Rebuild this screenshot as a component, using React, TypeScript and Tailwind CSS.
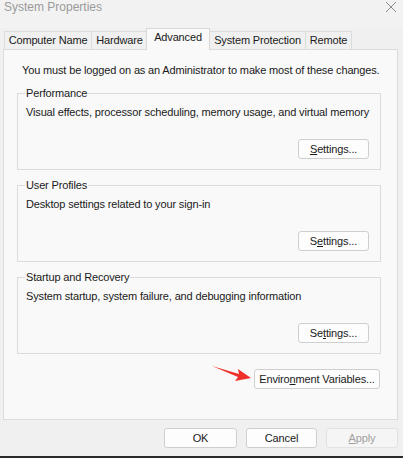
import React from "react";

function Btn({ children, className = "", disabled = false }: { children: React.ReactNode; className?: string; disabled?: boolean }) {
  return (
    <div
      className={
        "flex items-center justify-center h-[20px] rounded-[3px] border text-[11px] tracking-[-0.15px] whitespace-nowrap " +
        (disabled ? "border-[#e2e2e2] bg-[#f5f5f5] text-[#a0a0a0] " : "border-[#cfcfcf] bg-[#fdfdfd] text-[#1a1a1a] ") +
        className
      }
    >
      {children}
    </div>
  );
}

function Group({ title, desc, btn }: { title: string; desc: string; btn: React.ReactNode }) {
  return (
    <fieldset className="ml-[13px] mr-[16px] border border-[#dcdcdc] pl-[7px] pr-[11px] pb-[10px]">
      <legend className="px-[1px] text-[11px] leading-[16px] tracking-[-0.15px] text-[#1a1a1a]">{title}</legend>
      <div className="mt-[3px] pl-[1px] text-[11px] leading-[16px] tracking-[-0.15px] whitespace-nowrap text-[#1a1a1a]">{desc}</div>
      <div className="mt-[19px] flex justify-end">
        <Btn className="w-[71px]">{btn}</Btn>
      </div>
    </fieldset>
  );
}

export default function App() {
  const tabs = [
    { t: "Computer Name", w: 88 },
    { t: "Hardware", w: 57 },
    { t: "Advanced", w: 64, active: true },
    { t: "System Protection", w: 97 },
    { t: "Remote", w: 47 },
  ];
  return (
    <div
      className="w-[403px] h-[458px] bg-[#f0f0f0] flex flex-col overflow-hidden"
      style={{ fontFamily: '"Liberation Sans", Arial, sans-serif' }}
    >
      <div className="h-[28px] flex items-start justify-between bg-[#f2f2f2]">
        <div className="pl-[4px] pt-0 text-[12px] leading-[14px] text-[#9a9a9a]">System Properties</div>
        <svg width="12" height="12" viewBox="0 0 12 12" className="mr-[6px] mt-[1px]">
          <path d="M1 1 L11 11 M11 1 L1 11" stroke="#8a8a8a" strokeWidth="1" fill="none" />
        </svg>
      </div>
      <div className="flex items-end h-[21px] pl-[4px] relative z-10">
        {tabs.map((tab) =>
          tab.active ? (
            <div
              key={tab.t}
              style={{ width: tab.w }}
              className="h-[22px] -mb-px border border-b-0 border-[#d9d9d9] bg-[#f9f9f9] flex items-start justify-center pt-[2px] text-[11px] leading-[13px] tracking-[-0.15px] text-[#1a1a1a] -mx-px relative"
            >
              {tab.t}
            </div>
          ) : (
            <div
              key={tab.t}
              style={{ width: tab.w }}
              className="h-[18px] border border-b-0 border-[#dcdcdc] bg-[#f0f0f0] flex items-center justify-center text-[11px] leading-[13px] tracking-[-0.15px] text-[#1a1a1a] -mr-px"
            >
              {tab.t}
            </div>
          )
        )}
      </div>
      <div className="ml-[3px] mr-[5px] h-[371px] border border-[#dcdcdc] bg-[#f9f9f9] flex flex-col">
        <div className="mt-[12px] pl-[18px] text-[11px] leading-[16px] tracking-[-0.15px] whitespace-nowrap text-[#1a1a1a]">
          You must be logged on as an Administrator to make most of these changes.
        </div>
        <div className="mt-[7px] flex flex-col gap-[7px]">
          <Group title="Performance" desc="Visual effects, processor scheduling, memory usage, and virtual memory" btn={<span><u>S</u>ettings...</span>} />
          <Group title="User Profiles" desc="Desktop settings related to your sign-in" btn={<span>S<u>e</u>ttings...</span>} />
          <Group title="Startup and Recovery" desc="System startup, system failure, and debugging information" btn={<span>Se<u>t</u>tings...</span>} />
        </div>
        <div className="mt-[15px] flex justify-end mr-[17px] relative">
          <svg width="42" height="20" viewBox="0 0 42 20" className="absolute left-[207px] top-[-5px]">
            <path d="M1 2 L28 10 L27 5 L40 14 L24 17 L27 13 Z" fill="#f0302a" />
          </svg>
          <Btn className="w-[126px] h-[20px]">
            <span>Enviro<u>n</u>ment Variables...</span>
          </Btn>
        </div>
      </div>
      <div className="mt-[8px] flex justify-end gap-[9px] pr-[5px]">
        <Btn className="w-[73px]">OK</Btn>
        <Btn className="w-[71px]">Cancel</Btn>
        <Btn className="w-[72px]" disabled>
          <span><u>A</u>pply</span>
        </Btn>
      </div>
      <div className="flex-1" />
      <div className="h-[2px] bg-[#2b2b2b]" />
    </div>
  );
}
